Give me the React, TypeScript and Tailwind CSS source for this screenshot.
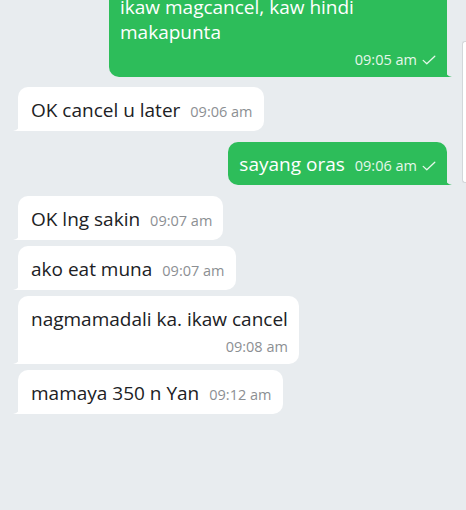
import React from "react";

const font = { fontFamily: '"Open Sans", "Noto Sans", sans-serif' };

function Check() {
  return (
    <svg width="14" height="10" viewBox="0 0 14 10" className="ml-[5px] inline-block">
      <path d="M1.2 5.4 L4.8 8.8 L12.8 1.2" fill="none" stroke="#e6f7eb" strokeWidth="1.3" strokeLinecap="round" strokeLinejoin="round" />
    </svg>
  );
}

function LeftTail() {
  return (
    <svg width="7" height="7" viewBox="0 0 7 7" className="absolute left-[-5px] bottom-0">
      <path d="M7 0 Q6 6 0 7 L7 7 Z" fill="#ffffff" />
    </svg>
  );
}

function RightTail() {
  return (
    <svg width="7" height="7" viewBox="0 0 7 7" className="absolute right-[-5px] bottom-0">
      <path d="M0 0 Q1 6 7 7 L0 7 Z" fill="#2dbd5a" />
    </svg>
  );
}

function InBubble({ text, time, two }: { text: string; time: string; two?: boolean }) {
  return (
    <div className="relative self-start bg-white rounded-[10px] rounded-bl-none pl-[13px] pr-[11px] pt-[11px] pb-[8px]">
      <LeftTail />
      {two ? (
        <div className="flex flex-col">
          <div className="text-[19px] leading-[25px] text-[#202124]">{text}</div>
          <div className="self-end mt-[6px] text-[14.5px] leading-[18px] text-[#8c8f93]">{time}</div>
        </div>
      ) : (
        <div className="flex flex-row items-baseline">
          <span className="text-[19px] leading-[25px] text-[#202124]">{text}</span>
          <span className="ml-[10px] text-[14.5px] leading-[18px] text-[#8c8f93]">{time}</span>
        </div>
      )}
    </div>
  );
}

export default function App() {
  return (
    <div className="w-[466px] h-[510px] overflow-hidden bg-[#e8ecef] flex flex-row" style={font}>
      <div className="flex-1 flex flex-col pl-[18px] pr-[15px]">
        <div className="relative self-end w-[338px] -mt-[17px] bg-[#2dbd5a] rounded-[10px] rounded-br-none pl-[11px] pr-[11px] pt-[12px] pb-[8px]">
          <RightTail />
          <div className="text-[19px] leading-[25px] text-white">
            ikaw magcancel, kaw hindi
            <br />
            makapunta
          </div>
          <div className="flex justify-end items-center mt-[6px] text-[14.5px] leading-[18px] text-[#e6f7eb]">
            09:05 am
            <Check />
          </div>
        </div>

        <div className="mt-[10px] flex flex-col">
          <InBubble text="OK cancel u later" time="09:06 am" />
        </div>

        <div className="relative self-end mt-[11px] bg-[#2dbd5a] rounded-[10px] rounded-br-none pl-[11px] pr-[11px] pt-[10px] pb-[8px]">
          <RightTail />
          <div className="flex flex-row items-baseline">
            <span className="text-[19px] leading-[25px] text-white">sayang oras</span>
            <span className="ml-[10px] text-[14.5px] leading-[18px] text-[#e6f7eb] flex items-center">
              09:06 am
              <Check />
            </span>
          </div>
        </div>

        <div className="mt-[11px] flex flex-col gap-[6px]">
          <InBubble text="OK lng sakin" time="09:07 am" />
          <InBubble text="ako eat muna" time="09:07 am" />
          <InBubble text="nagmamadali ka. ikaw cancel" time="09:08 am" two />
          <InBubble text="mamaya 350 n Yan" time="09:12 am" />
        </div>
      </div>
      <div className="w-[4px] mt-[41px] h-[142px] bg-white border-l border-y border-[#d3d7da] rounded-l-[3px]" />
    </div>
  );
}
